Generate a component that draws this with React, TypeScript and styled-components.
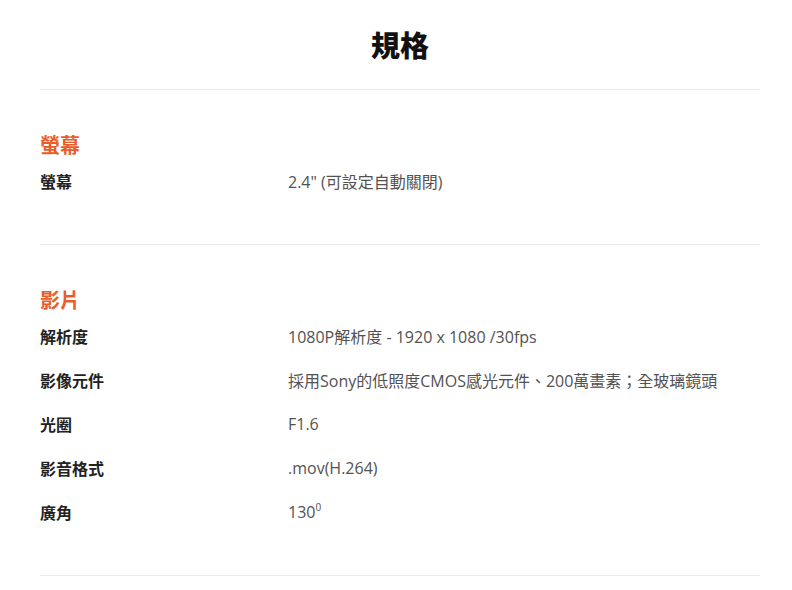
import React from "react";
import styled, { createGlobalStyle } from "styled-components";

const Global = createGlobalStyle`
  html, body { margin: 0; padding: 0; background: #fff; }
  body { font-family: "Open Sans", "Noto Sans CJK TC", sans-serif; }
`;

const Page = styled.div`
  padding: 0 32px 0 40px;
`;

const Title = styled.h1`
  margin: 0;
  padding: 24px 0 25px;
  font-family: "Noto Sans CJK TC", sans-serif;
  font-size: 29px;
  line-height: 40px;
  font-weight: 900;
  text-align: center;
  color: #111;
  border-bottom: 1px solid #ebebeb;
`;

const Section = styled.section`
  padding: 41px 0 41px;
  border-bottom: 1px solid #ebebeb;
`;

const SectionHeading = styled.h2`
  margin: 0;
  font-family: "Noto Sans CJK TC", sans-serif;
  font-size: 20px;
  line-height: 26px;
  padding: 1px 0 1px;
  font-weight: 700;
  color: #e95d2b;
`;

const Row = styled.div`
  display: grid;
  grid-template-columns: 248px 1fr;
  align-items: center;
  height: 44px;
  padding-bottom: 1px;
  box-sizing: border-box;
`;

const Label = styled.div`
  font-family: "Noto Sans CJK TC", sans-serif;
  font-size: 16px;
  font-weight: 700;
  color: #222;
`;

const Value = styled.div`
  font-size: 16px;
  color: #525252;
  sup {
    font-size: 10px;
    line-height: 0;
    vertical-align: 7px;
  }
`;

type Spec = { label: string; value: React.ReactNode };

const sections: { title: string; specs: Spec[] }[] = [
  { title: "螢幕", specs: [{ label: "螢幕", value: '2.4" (可設定自動關閉)' }] },
  {
    title: "影片",
    specs: [
      { label: "解析度", value: "1080P解析度 - 1920 x 1080 /30fps" },
      { label: "影像元件", value: "採用Sony的低照度CMOS感光元件、200萬畫素；全玻璃鏡頭" },
      { label: "光圈", value: "F1.6" },
      { label: "影音格式", value: ".mov(H.264)" },
      { label: "廣角", value: <>130<sup>0</sup></> },
    ],
  },
];

export default function App() {
  return (
    <>
      <Global />
      <Page>
        <Title>規格</Title>
        {sections.map((s) => (
          <Section key={s.title}>
            <SectionHeading>{s.title}</SectionHeading>
            {s.specs.map((sp) => (
              <Row key={sp.label}>
                <Label>{sp.label}</Label>
                <Value>{sp.value}</Value>
              </Row>
            ))}
          </Section>
        ))}
      </Page>
    </>
  );
}
